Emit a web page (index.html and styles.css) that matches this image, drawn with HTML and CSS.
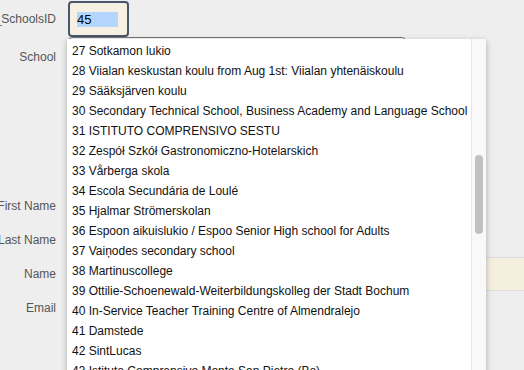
FILE: index.html
```html
<!DOCTYPE html>
<html>
<head>
    <title>Edit Teacher</title>
    <link rel="stylesheet" href="styles.css">
</head>
<body>
    <div class="form">
        <div class="row row-id">
            <label class="label">Old_SchoolsID</label>
            <div class="id-box"><span class="sel">45</span></div>
        </div>
        <div class="row row-school">
            <label class="label">School</label>
            <div class="select-box"></div>
        </div>
        <div class="row row-first">
            <label class="label">First Name</label>
            <div class="text-box"></div>
        </div>
        <div class="row">
            <label class="label">Last Name</label>
            <div class="text-box"></div>
        </div>
        <div class="row">
            <label class="label">Name</label>
            <div class="text-box wide"></div>
        </div>
        <div class="row">
            <label class="label">Email</label>
            <div class="text-box"></div>
        </div>
    </div>

    <!-- open dropdown of the School select -->
    <div class="popup">
        <div class="options" id="options"></div>
        <div class="scrollbar"><div class="thumb"></div></div>
    </div>

    <script>
        const schools = [
            "27 Sotkamon lukio",
            "28 Viialan keskustan koulu from Aug 1st: Viialan yhtenäiskoulu",
            "29 Sääksjärven koulu",
            "30 Secondary Technical School, Business Academy and Language School",
            "31 ISTITUTO COMPRENSIVO SESTU",
            "32 Zespół Szkół Gastronomiczno-Hotelarskich",
            "33 Vårberga skola",
            "34 Escola Secundária de Loulé",
            "35 Hjalmar Strömerskolan",
            "36 Espoon aikuislukio / Espoo Senior High school for Adults",
            "37 Vaiņodes secondary school",
            "38 Martinuscollege",
            "39 Ottilie-Schoenewald-Weiterbildungskolleg der Stadt Bochum",
            "40 In-Service Teacher Training Centre of Almendralejo",
            "41 Damstede",
            "42 SintLucas",
            "43 Istituto Comprensivo Monte San Pietro (Bo)"
        ];

        const list = document.getElementById('options');
        schools.forEach(name => {
            const item = document.createElement('div');
            item.className = 'option';
            item.innerText = name;
            list.appendChild(item);
        });
    </script>
</body>
</html>
```

FILE: styles.css
```css
/* General */
body {
    margin: 0;
    background-color: #eeeeee;
    font-family: "Liberation Sans", Arial, sans-serif;
    font-size: 12px;
    color: #222;
    overflow: hidden;
}
/* Form rows */
.form {
    display: flex;
    flex-direction: column;
    padding-top: 1px;
}
.row {
    display: flex;
    align-items: center;
    height: 34px;
}
.label {
    width: 56px;
    flex-shrink: 0;
    display: flex;
    justify-content: flex-end;
    white-space: nowrap;
    margin-right: 12px;
    color: #555;
}
.row-id {
    height: 36px;
}
.row-school {
    height: 40px;
    align-items: flex-start;
}
.row-school .label {
    margin-top: 13px;
}
.row-first {
    margin-top: 112px;
}
/* Fields */
.id-box {
    background-color: #f5f0e1;
    border: 2px solid #48566e;
    border-radius: 4px;
    display: flex;
    align-items: center;
    padding-left: 7px;
    box-sizing: border-box;
    width: 61px;
    height: 36px;
    font-size: 13px;
    color: #000;
}
.sel {
    display: inline-block;
    width: 41px;
    height: 15px;
    line-height: 15px;
    background-color: #b4d5fe;
}
.select-box {
    width: 338px;
    height: 40px;
    border: 1px solid #777;
    border-radius: 4px;
    background-color: #f7f7f7;
    box-sizing: border-box;
}
.text-box {
    width: 330px;
    height: 34px;
    border: 1px solid #ccc;
    background-color: #fff;
    box-sizing: border-box;
}
.text-box.wide {
    flex: 1;
    background-color: #f5efdf;
    border-color: #dcdcdc;
    border-left: none;
    border-right: none;
}
/* Dropdown */
.popup {
    position: absolute;
    left: 67px;
    top: 39px;
    width: 419px;
    height: 340px;
    display: flex;
    background-color: #fff;
    box-shadow: 0 2px 6px rgba(0, 0, 0, 0.3);
}
.options {
    flex: 1;
    overflow: hidden;
    padding-top: 2px;
}
.option {
    height: 20px;
    line-height: 20px;
    padding-left: 5px;
    white-space: nowrap;
    color: #111;
}
.scrollbar {
    width: 14px;
    background-color: #f9f9f9;
    border-left: 1px solid #e6e6e6;
    padding-top: 116px;
}
.thumb {
    width: 8px;
    height: 79px;
    margin-left: 3px;
    border-radius: 4px;
    background-color: #c1c1c1;
}
```
